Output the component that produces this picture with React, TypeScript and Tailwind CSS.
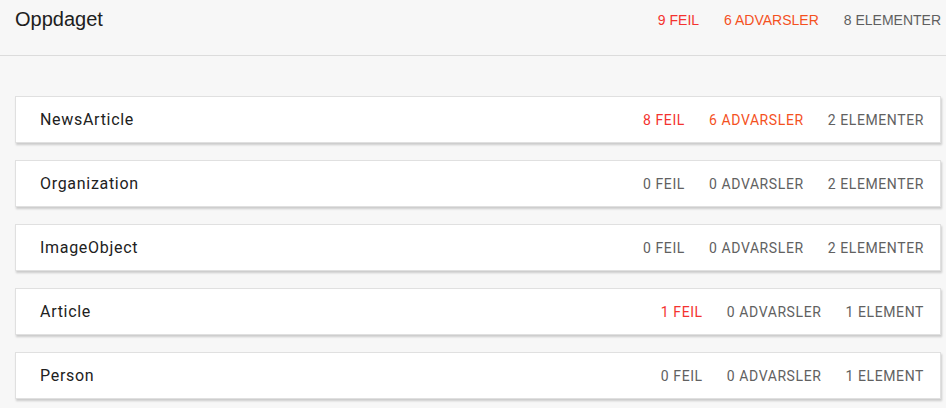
const types = [
  { name: 'NewsArticle', errors: 8, warnings: 6, items: '2 ELEMENTER' },
  { name: 'Organization', errors: 0, warnings: 0, items: '2 ELEMENTER' },
  { name: 'ImageObject', errors: 0, warnings: 0, items: '2 ELEMENTER' },
  { name: 'Article', errors: 1, warnings: 0, items: '1 ELEMENT' },
  { name: 'Person', errors: 0, warnings: 0, items: '1 ELEMENT' },
];

export default function App() {
  return (
    <div className="min-h-screen w-full bg-[#f7f7f7]">
      <div className="box-border flex h-[56px] items-start justify-between border-b border-[#dcdcdc] pl-[15px] pr-[5px] pt-[8px] font-['Liberation_Sans',Arial,sans-serif]">
        <h1 className="text-[20px] leading-[23px] text-[#202020]">Oppdaget</h1>
        <div className="flex gap-[25px] pt-[4px] text-[14px] leading-[16px]">
          <span className="text-[#f4332f]">9 FEIL</span>
          <span className="text-[#f4511e]">6 ADVARSLER</span>
          <span className="text-[#5f5f5f]">8 ELEMENTER</span>
        </div>
      </div>

      <div className="flex flex-col gap-[17px] pl-[15px] pr-[5px] pt-[40px] font-['Roboto',sans-serif]">
        {types.map((t) => (
          <div
            key={t.name}
            className="box-border flex h-[47px] items-center justify-between border border-[#e0e0e0] bg-white pl-[24px] pr-[16px] pt-[1px] shadow-[1px_2px_2px_rgba(0,0,0,0.18)]"
          >
            <span className="text-[16px] tracking-[0.7px] text-[#212121]">{t.name}</span>
            <div className="flex gap-[24px] text-[14px] tracking-[0.6px]">
              <span className={t.errors > 0 ? 'text-[#f4332f]' : 'text-[#616161]'}>{t.errors} FEIL</span>
              <span className={t.warnings > 0 ? 'text-[#f4511e]' : 'text-[#616161]'}>{t.warnings} ADVARSLER</span>
              <span className="text-[#616161]">{t.items}</span>
            </div>
          </div>
        ))}
      </div>
    </div>
  );
}
